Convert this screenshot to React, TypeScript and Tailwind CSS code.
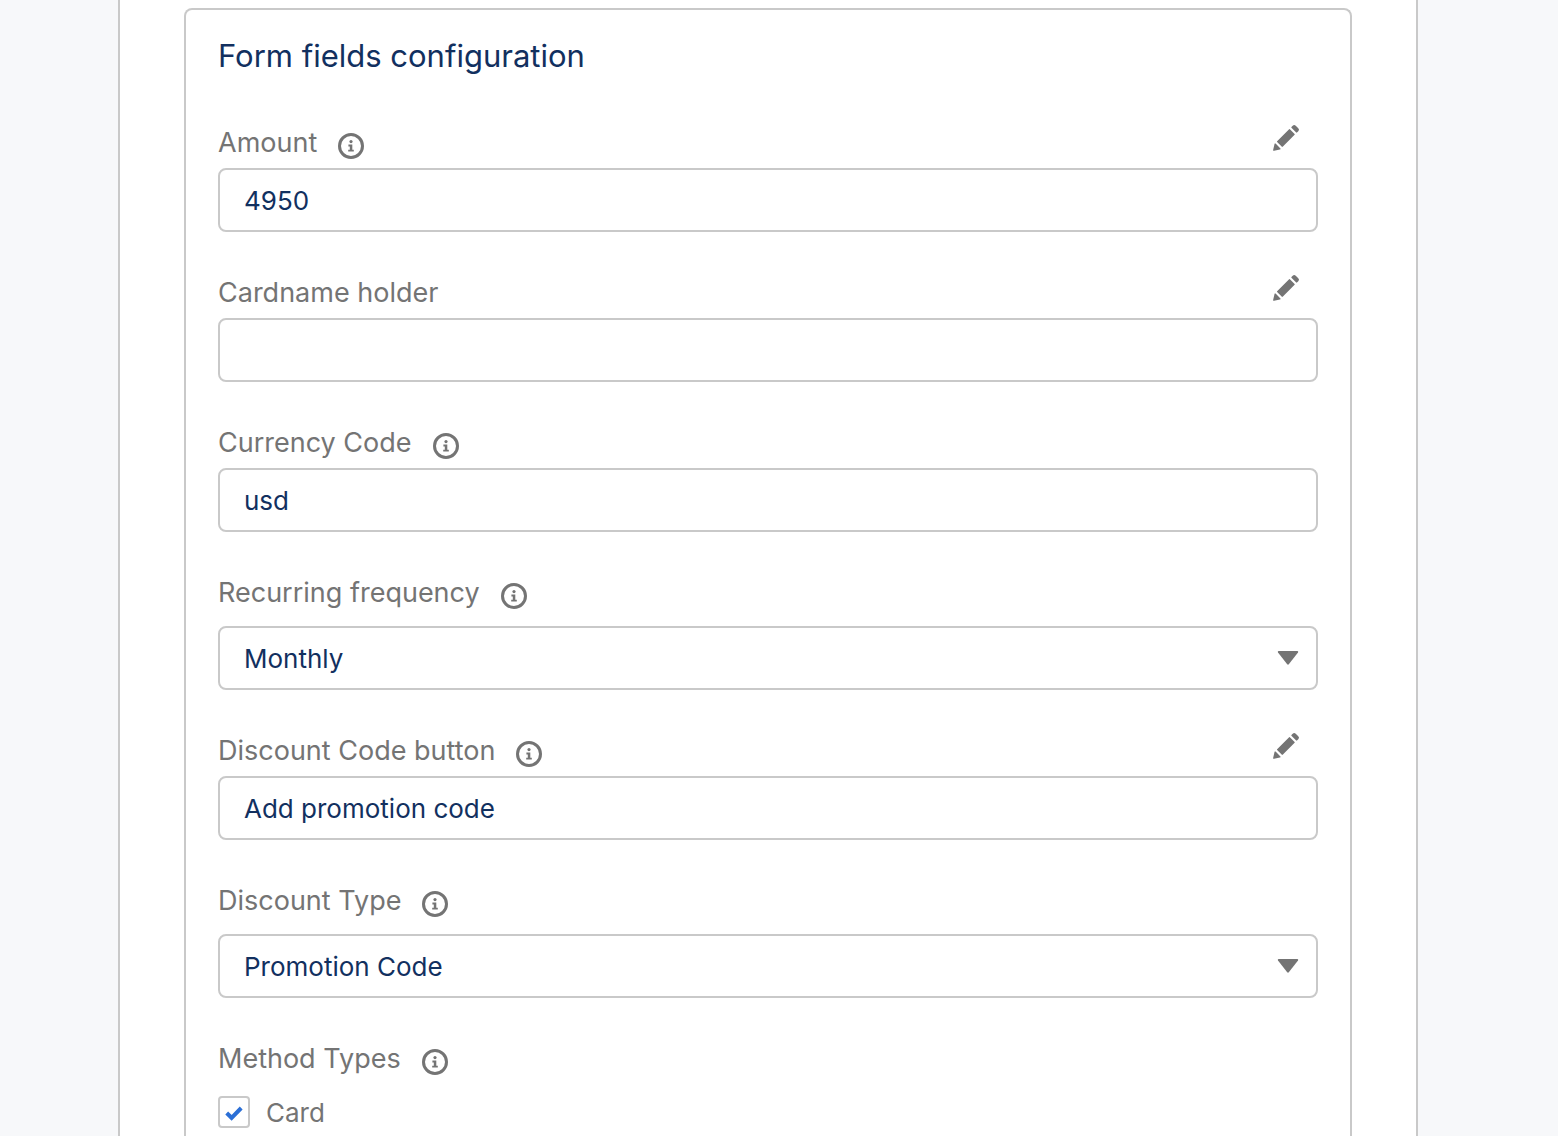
import { useState } from "react";
import type { ReactNode } from "react";

interface Field {
  id: string;
  label: string;
  value: string;
  info: boolean;
  editable: boolean;
  options?: string[];
}

export default function App() {
  const [fields, setFields] = useState<Field[]>(FIELDS);
  const [card, setCard] = useState(true);

  function updateField(id: string, value: string) {
    setFields((prev) =>
      prev.map((item) => (item.id === id ? { ...item, value } : item))
    );
  }

  return (
    <div className="min-h-screen flex bg-[#f7f8fa] pl-[118px] pr-[140px] font-[Inter,sans-serif] text-[#747474]">
      <main className="flex flex-1 flex-col border-x-2 border-[#c9c9c9] bg-white px-16 pt-2">
        <section className="flex-1 rounded-t-lg border-2 border-b-0 border-[#c9c9c9] px-8 pt-[26px]">
          <h1 className="text-[31px] leading-10 text-[#12305f]">
            Form fields configuration
          </h1>
          <form className="mt-[50px] flex flex-col gap-11">
            {fields.map((item) => (
              <div
                key={item.id}
                className={`flex flex-col ${item.options ? "gap-4" : "gap-2"}`}
              >
                <FieldHeader info={item.info} editable={item.editable}>
                  <label htmlFor={item.id}>{item.label}</label>
                </FieldHeader>
                {item.options ? (
                  <div className="relative">
                    <select
                      id={item.id}
                      value={item.value}
                      onChange={(e) => updateField(item.id, e.target.value)}
                      className="h-16 w-full appearance-none rounded-lg border-2 border-[#c9c9c9] bg-white px-6 text-[26px] text-[#12305f]"
                    >
                      {item.options.map((option) => (
                        <option key={option}>{option}</option>
                      ))}
                    </select>
                    <svg
                      viewBox="0 0 22 14"
                      className="pointer-events-none absolute right-[19px] top-[25px] h-[14px] w-[22px] fill-[#747474]"
                    >
                      <path d="M1.6 0h18.8c.8 0 1 .8.6 1.4l-9.2 11.9c-.4.5-1.2.5-1.6 0L1 1.4C.6.8.8 0 1.6 0z" />
                    </svg>
                  </div>
                ) : (
                  <input
                    id={item.id}
                    type="text"
                    value={item.value}
                    onChange={(e) => updateField(item.id, e.target.value)}
                    className="h-16 w-full rounded-lg border-2 border-[#c9c9c9] bg-white px-6 text-[26px] text-[#12305f]"
                  />
                )}
              </div>
            ))}
            <fieldset>
              <legend className="contents">
                <FieldHeader info={true} editable={false}>
                  Method Types
                </FieldHeader>
              </legend>
              <label className="mt-5 flex h-8 w-fit items-center gap-4 text-[26px]">
                <span className="relative block h-8 w-8">
                  <input
                    type="checkbox"
                    checked={card}
                    onChange={(e) => setCard(e.target.checked)}
                    className="block h-8 w-8 appearance-none rounded border-2 border-[#c9c9c9] bg-white"
                  />
                  {card && (
                    <svg
                      viewBox="0 0 32 32"
                      className="pointer-events-none absolute inset-0 h-8 w-8 fill-none stroke-[#2b6fd6]"
                    >
                      <path d="M8.7 17l4.9 4.8L23.2 12" strokeWidth="4" />
                    </svg>
                  )}
                </span>
                Card
              </label>
            </fieldset>
          </form>
        </section>
      </main>
    </div>
  );
}

function FieldHeader({
  info,
  editable,
  children,
}: {
  info: boolean;
  editable: boolean;
  children: ReactNode;
}) {
  return (
    <div className="flex h-[34px] items-center text-[27px] leading-[34px]">
      {children}
      {info && (
        <button type="button" aria-label="Help" className="ml-5 mt-1.5">
          <svg viewBox="0 0 28 28" className="block h-7 w-7 fill-[#747474]">
            <circle
              cx="14"
              cy="14"
              r="11.5"
              fill="none"
              stroke="#747474"
              strokeWidth="3"
            />
            <circle cx="14" cy="9.6" r="1.6" />
            <path d="M11.4 12.5h3.9v5.2h1.5v1.9h-5.6v-1.9h1.6v-3.3h-1.4z" />
          </svg>
        </button>
      )}
      {editable && (
        <button
          type="button"
          aria-label="Edit"
          className="ml-auto mr-[18px] self-start -mt-0.5"
        >
          <svg viewBox="0 0 520 520" className="block h-7 w-7 fill-[#747474]">
            <path d="M95 334l89 89c4 4 10 4 14 0l222-223c4-4 4-10 0-14l-88-88a10 10 0 00-14 0L95 321c-4 4-4 10 0 13zM361 57a10 10 0 000 14l88 88c4 4 10 4 14 0l25-25a38 38 0 000-55l-47-47a40 40 0 00-57 0l-23 25zM21 482c-2 10 7 19 17 17l109-26c4-1 7-3 9-5l2-2c2-2 3-9-1-13l-90-90c-4-4-11-3-13-1l-2 2a20 20 0 00-5 9L21 482z" />
          </svg>
        </button>
      )}
    </div>
  );
}

const FIELDS: Field[] = [
  {
    id: "amount",
    label: "Amount",
    value: "4950",
    info: true,
    editable: true,
  },
  {
    id: "cardname",
    label: "Cardname holder",
    value: "",
    info: false,
    editable: true,
  },
  {
    id: "currency",
    label: "Currency Code",
    value: "usd",
    info: true,
    editable: false,
  },
  {
    id: "frequency",
    label: "Recurring frequency",
    value: "Monthly",
    info: true,
    editable: false,
    options: ["Monthly"],
  },
  {
    id: "discountButton",
    label: "Discount Code button",
    value: "Add promotion code",
    info: true,
    editable: true,
  },
  {
    id: "discountType",
    label: "Discount Type",
    value: "Promotion Code",
    info: true,
    editable: false,
    options: ["Promotion Code"],
  },
];
